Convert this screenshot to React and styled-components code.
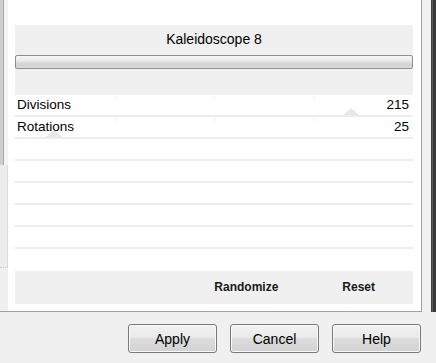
import React from "react";
import styled, { createGlobalStyle } from "styled-components";

const Global = createGlobalStyle`
  html, body { margin: 0; padding: 0; background: #f0f0f0; }
  body { font-family: "Liberation Sans", Arial, sans-serif; color: #000; }
  #root { width: 436px; height: 363px; overflow: hidden; }
`;

const Window = styled.div`
  width: 436px;
  height: 363px;
  display: flex;
  flex-direction: column;
  background: #f0f0f0;
`;

const Top = styled.div`
  display: flex;
  height: 312px;
`;

const Panel = styled.div`
  box-sizing: border-box;
  width: 422px;
  height: 312px;
  background: #fff;
  border-right: 1px solid #a0a0a0;
  border-bottom: 1px solid #a0a0a0;
  display: flex;
`;

const Scrollbar = styled.div`
  width: 8px;
  display: flex;
  flex-direction: column;
  background: #f0f0f0;
`;

const Thumb = styled.div`
  box-sizing: border-box;
  height: 165px;
  width: 8px;
  background: linear-gradient(90deg, #cfcfcf 0, #cfcfcf 3px, #a9a9a9 3px, #a9a9a9 4px, #f4f4f4 4px);
`;

const Track = styled.div`
  box-sizing: border-box;
  height: 103px;
  border-right: 1px solid #dcdcdc;
  border-bottom: 1px dotted #c8c8c8;
  background: #ececec;
`;

const Content = styled.div`
  margin-left: 7px;
  width: 398px;
  padding-top: 25px;
  display: flex;
  flex-direction: column;
`;

const Header = styled.div`
  box-sizing: border-box;
  height: 70px;
  background: #f0f0f0;
  padding-top: 6px;
  display: flex;
  flex-direction: column;
  align-items: stretch;
`;

const Title = styled.div`
  font-size: 14px;
  line-height: 16px;
  text-align: center;
`;

const Bar = styled.div`
  box-sizing: border-box;
  margin-top: 8px;
  height: 14px;
  border: 1px solid #8f8f8f;
  border-radius: 2px;
  background: linear-gradient(#f6f6f6 0%, #ececec 35%, #d9d9d9 60%, #d2d2d2 85%, #e0e0e0 100%);
`;

const Row = styled.div`
  position: relative;
  box-sizing: border-box;
  height: 22px;
  border-bottom: 2px solid ${(p) => (p.$last ? "transparent" : "#ececec")};
  display: flex;
  align-items: center;
  justify-content: space-between;
  padding: 0 4px 0 2px;
  font-size: 13.5px;
  line-height: 20px;
`;

const Label = styled.span`
  position: relative;
  z-index: 1;
`;

const Value = styled.span`
  position: relative;
  z-index: 1;
`;

const ThumbMark = styled.div`
  position: absolute;
  bottom: 0;
  width: 0;
  height: 0;
  margin-left: -8px;
  border-left: 8px solid transparent;
  border-right: 8px solid transparent;
  border-bottom: 7px solid #e8e8e8;
`;

const Tick = styled.div`
  position: absolute;
  top: 1px;
  width: 1px;
  height: 4px;
  background: #f0f0f0;
`;

const Rows = styled.div`
  display: flex;
  flex-direction: column;
`;

const Footer = styled.div`
  box-sizing: border-box;
  height: 33px;
  background: #f0f0f0;
  display: flex;
  justify-content: flex-end;
  align-items: center;
  gap: 64px;
  padding: 0 38px 2px 0;
`;

const FooterButton = styled.span`
  font-size: 12px;
  font-weight: bold;
  color: #1a1a1a;
`;

const Gutter = styled.div`
  width: 9px;
  background: #f0f0f0;
`;

const Edge = styled.div`
  width: 5px;
  background: linear-gradient(90deg, #3e3e3e 0, #3e3e3e 1px, #5a5a5a 1px, #5a5a5a 2px, #383838 2px);
`;

const Buttons = styled.div`
  display: flex;
  justify-content: flex-end;
  gap: 13px;
  padding: 12px 15px 0 0;
`;

const Button = styled.button`
  box-sizing: border-box;
  width: 89px;
  height: 29px;
  border: 1px solid #7a7a7a;
  border-radius: 3px;
  background: linear-gradient(#f2f2f2 0%, #ebebeb 45%, #dddddd 50%, #d2d2d2 100%);
  box-shadow: inset 0 0 0 1px #f8f8f8;
  font-family: "Liberation Sans", Arial, sans-serif;
  font-size: 14px;
  color: #000;
  padding: 0;
`;

const params = [
  { label: "Divisions", value: 215 },
  { label: "Rotations", value: 25 },
];

const MAX = 255;

export default function App() {
  return (
    <Window>
      <Global />
      <Top>
        <Panel>
          <Scrollbar>
            <Thumb />
            <Track />
          </Scrollbar>
          <Content>
            <Header>
              <Title>Kaleidoscope 8</Title>
              <Bar />
            </Header>
            <Rows>
              {params.map((p) => (
                <Row key={p.label}>
                  <Label>{p.label}</Label>
                  <Value>{p.value}</Value>
                  <ThumbMark style={{ left: `${(p.value / MAX) * 100}%` }} />
                  <Tick style={{ left: "25%" }} />
                  <Tick style={{ left: "50%" }} />
                  <Tick style={{ left: "75%" }} />
                </Row>
              ))}
              <Row />
              <Row />
              <Row />
              <Row />
              <Row />
              <Row $last />
            </Rows>
            <Footer>
              <FooterButton>Randomize</FooterButton>
              <FooterButton>Reset</FooterButton>
            </Footer>
          </Content>
        </Panel>
        <Gutter />
        <Edge />
      </Top>
      <Buttons>
        <Button>Apply</Button>
        <Button>Cancel</Button>
        <Button>Help</Button>
      </Buttons>
    </Window>
  );
}
